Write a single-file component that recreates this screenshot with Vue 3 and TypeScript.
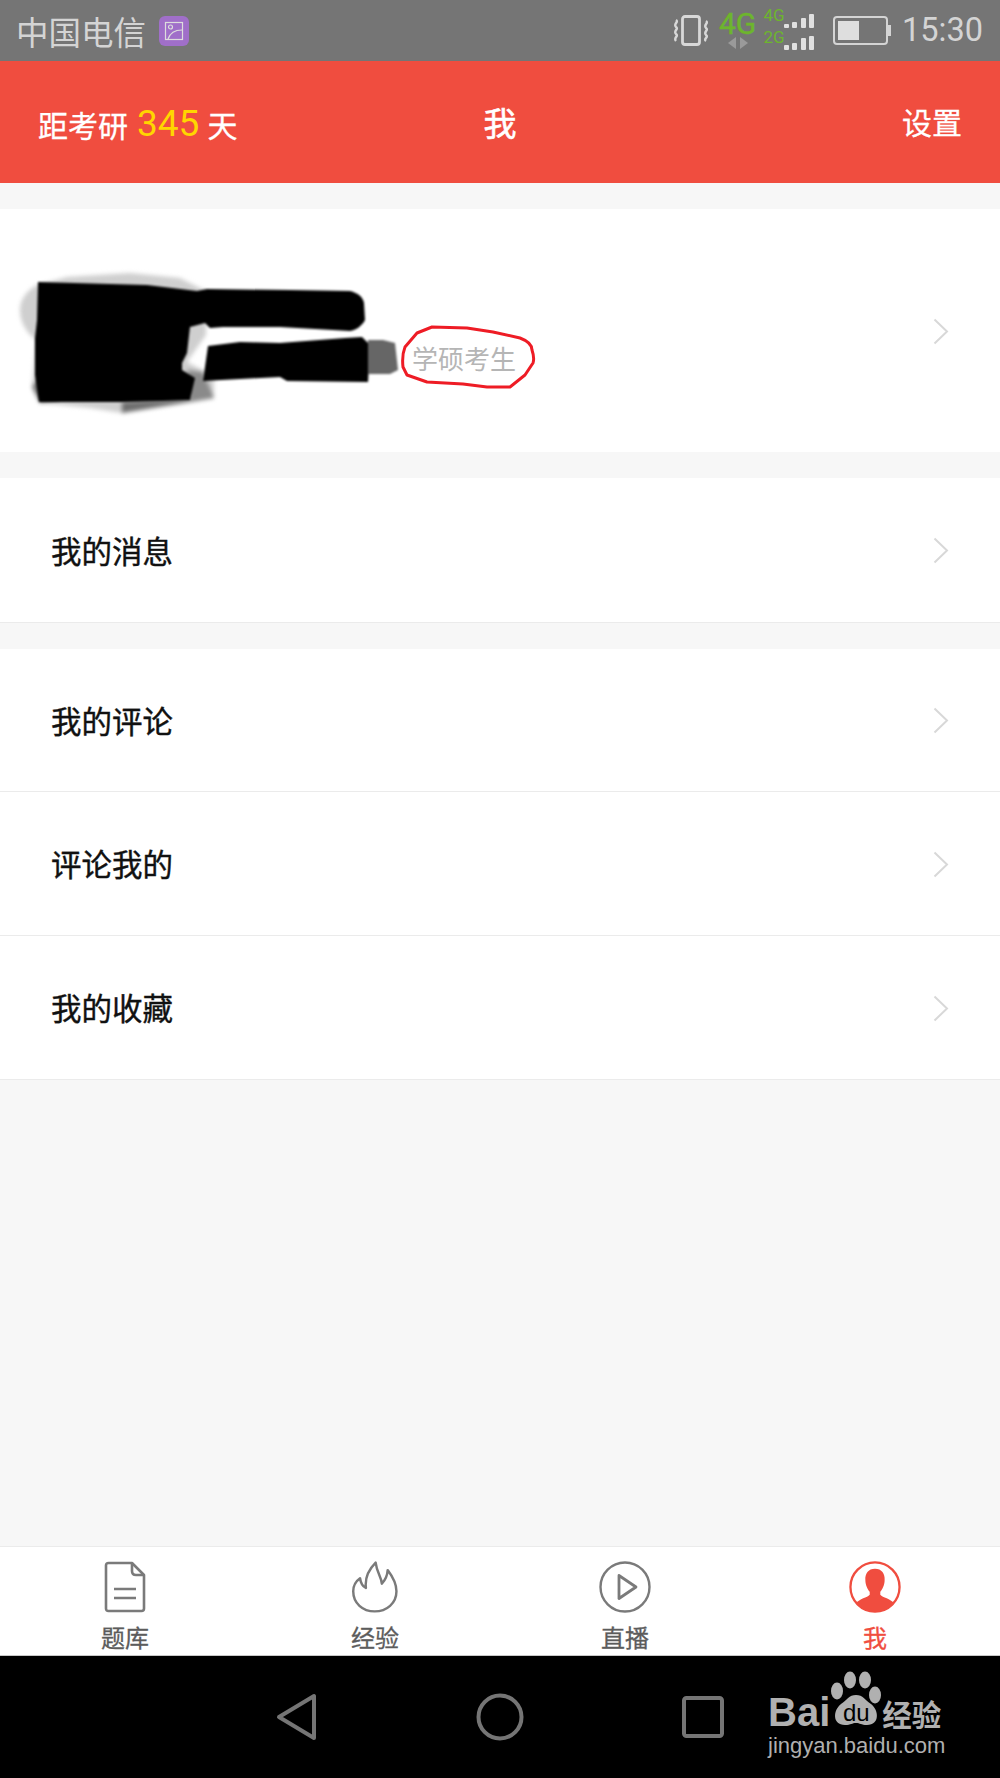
<script setup lang="ts">
const messageRows = ['我的消息']
const listRows = ['我的评论', '评论我的', '我的收藏']
const tabs = [
  { key: 'bank', label: '题库' },
  { key: 'exp', label: '经验' },
  { key: 'live', label: '直播' },
  { key: 'me', label: '我' }
]
// heights of the signal bars: [top sim, bottom sim]
const signalBars = [
  [4, 5],
  [6, 7],
  [10, 12],
  [14, 14]
]
</script>

<template>
  <div class="page">
    <div class="status">
      <div class="status-left">
        <span class="carrier">中国电信</span>
        <span class="pic-badge">
          <svg width="20" height="20" viewBox="0 0 20 20" fill="none" stroke="#ddd" stroke-width="1.2">
            <rect x="1.5" y="1.5" width="17" height="17" />
            <circle cx="6.5" cy="6" r="2" />
            <path d="M4 18 C6 12 11 9 18 9" />
          </svg>
        </span>
      </div>
      <div class="status-right">
        <svg class="vibrate" width="36" height="32" viewBox="0 0 36 32" fill="none" stroke="#d8d8d8">
          <rect x="9.5" y="1.5" width="17" height="28" rx="2.5" stroke-width="2.8" />
          <path d="M3 5 C6 7 0 9 3 12 C6 14 0 16 3 19 C6 21 0 23 3 26" stroke-width="2.4" />
          <path d="M33 6 C36 8 30 10 33 13 C36 15 30 17 33 20 C36 22 30 24 33 26" stroke-width="2.4" />
        </svg>
        <div class="net-main">
          <span class="net-big">4G</span>
          <svg width="20" height="12" viewBox="0 0 20 12" fill="#9a9a9a">
            <path d="M8 0 V12 L0 6 Z" />
            <path d="M12 0 V12 L20 6 Z" />
          </svg>
        </div>
        <div class="net-sub">
          <div v-for="name in ['4G', '2G']" :key="name" class="net-row">
            <span class="net-small">{{ name }}</span>
            <span class="bars">
              <i v-for="(bar, idx) in signalBars" :key="idx" :style="{ height: bar[name === '4G' ? 0 : 1] + 'px' }"></i>
            </span>
          </div>
        </div>
        <div class="battery">
          <div class="battery-fill"></div>
        </div>
        <span class="clock">15:30</span>
      </div>
    </div>

    <header class="topbar">
      <div class="countdown">距考研<b>345</b>天</div>
      <div class="title">我</div>
      <div class="setting">设置</div>
    </header>

    <main class="content">
      <section class="card profile">
        <div class="profile-info">
          <span class="role">学硕考生</span>
        </div>
        <svg class="chevron" width="16" height="27" viewBox="0 0 16 27"><path d="M1.5 1.5 L14 13.5 L1.5 25.5" /></svg>
        <!-- hand-drawn redaction on top of the screenshot -->
        <svg class="scribble" width="560" height="243" viewBox="0 209 560 243">
          <g class="smudge">
            <path d="M20 310 C20 298 28 290 37 285 L67 277 L130 273 L180 278 L206 291 L206 335 L187 362 L214 376 L214 398 L190 402 L122 413 L90 408 L40 403 L32 387 L36 340 C26 332 20 322 20 310 Z" fill="#cfcfcf" />
            <path d="M32 387 L40 376 L60 400 L40 403 Z M122 402 L214 398 L122 413 Z" fill="#6f6f6f" />
            <path d="M187 370 L203 372 L214 398 L190 402 Z" fill="#8a8a8a" />
          </g>
          <g class="blackout">
            <path d="M38 282 L147 285 L197 291 L207 289 L290 290 L350 291 C358 293 363 297 364 303 L365 320 C362 326 356 330 350 331 L280 327 L223 327 L210 328 L205 323 L190 327 L187 353 L182 363 L182 370 L195 378 L190 400 L163 401 L122 402 L39 402 L35 375 L35 338 L37 320 Z" fill="#000" />
            <path d="M208 346 L240 342 L280 343 L345 338 L362 337 L370 345 L368 382 L287 381 L280 377 L203 381 Z" fill="#000" />
            <path d="M368 340 L383 340 L395 343 L398 370 L390 374 L368 374 Z" fill="#666" />
          </g>
          <path d="M432 327 L467 328 L493 332 L520 338 C528 341 532 345 532 350 C534 356 534 360 533 363 L525 375 L510 387 L487 387 L463 384 L427 382 L407 375 L403 367 C402 358 403 352 405 347 L417 333 Z" fill="none" stroke="#ee1c25" stroke-width="3" stroke-linejoin="round" />
        </svg>
      </section>

      <section class="card">
        <div v-for="row in messageRows" :key="row" class="row">
          <span>{{ row }}</span>
          <svg class="chevron" width="16" height="27" viewBox="0 0 16 27"><path d="M1.5 1.5 L14 13.5 L1.5 25.5" /></svg>
        </div>
      </section>

      <section class="card">
        <div v-for="row in listRows" :key="row" class="row">
          <span>{{ row }}</span>
          <svg class="chevron" width="16" height="27" viewBox="0 0 16 27"><path d="M1.5 1.5 L14 13.5 L1.5 25.5" /></svg>
        </div>
      </section>
    </main>

    <nav class="tabs">
      <div v-for="tab in tabs" :key="tab.key" class="tab" :class="{ active: tab.key === 'me' }">
        <svg v-if="tab.key === 'bank'" width="42" height="52" viewBox="0 0 42 52" fill="none" stroke="#7a7a7a" stroke-width="2.6" stroke-linejoin="round">
          <path d="M4.5 2 H28 L40 14 V47.5 Q40 50 37.5 50 H4.5 Q2 50 2 47.5 V4.5 Q2 2 4.5 2 Z" />
          <path d="M28 2 V10 Q28 14 32 14 H40" />
          <path d="M10 28 H32 M10 37 H32" />
        </svg>
        <svg v-else-if="tab.key === 'exp'" width="52" height="52" viewBox="1050 92 152 160" fill="none" stroke="#7a7a7a" stroke-width="7.5" stroke-linejoin="round">
          <path d="M1128 97 C1132 130 1146 140 1147 162 C1156 152 1164 138 1165 120 C1180 140 1192 160 1192 185 C1192 222 1162 247 1125 247 C1088 247 1059 222 1059 185 C1059 170 1066 155 1080 145 C1082 160 1088 170 1098 175 C1095 150 1105 120 1128 97 Z" />
        </svg>
        <svg v-else-if="tab.key === 'live'" width="52" height="52" viewBox="0 0 52 52" fill="none" stroke="#7a7a7a" stroke-width="2.4" stroke-linejoin="round">
          <circle cx="26" cy="26" r="24.5" />
          <path d="M20 14.5 L37 26 L20 37.5 Z" stroke-width="2.8" />
        </svg>
        <svg v-else width="54" height="52" viewBox="0 0 54 54">
          <circle cx="27" cy="27" r="25.5" fill="none" stroke="#f04d3f" stroke-width="2.4" />
          <path d="M27 8 C34 8 37.5 13 37 20 C37 25 34.5 30 32.5 32 L32.5 35 C35 38 43 39 47 44 C42 50 34 53 27 53 C20 53 12 50 7 44 C11 39 19 38 21.5 35 L21.5 32 C19.5 30 17 25 17 20 C16.5 13 20 8 27 8 Z" fill="#f04d3f" />
        </svg>
        <span class="tab-label">{{ tab.label }}</span>
      </div>
    </nav>

    <div class="navbar">
      <svg width="42" height="48" viewBox="0 0 42 48" fill="none" stroke="#757575" stroke-width="4" stroke-linejoin="round">
        <path d="M38 3 V45 L3 24 Z" />
      </svg>
      <svg width="48" height="48" viewBox="0 0 48 48" fill="none" stroke="#757575" stroke-width="4">
        <circle cx="24" cy="24" r="21.5" />
      </svg>
      <svg width="42" height="42" viewBox="0 0 42 42" fill="none" stroke="#757575" stroke-width="4">
        <rect x="2" y="2" width="38" height="38" rx="2.5" />
      </svg>

      <div class="watermark">
        <div class="wm-top">
          <span class="wm-bai">Bai</span>
          <span class="wm-paw">
            <svg width="52" height="56" viewBox="0 0 52 56" fill="#b0b0b0">
              <ellipse cx="20" cy="9" rx="6" ry="8.5" />
              <ellipse cx="35" cy="9" rx="6" ry="8.5" />
              <ellipse cx="7" cy="20" rx="6" ry="8.5" />
              <ellipse cx="45" cy="24" rx="6" ry="8.5" />
              <path d="M26 24 C33 24 35 29 41 33 C49 39 50 54 37 54 C31 54 30 52 26 52 C22 52 21 54 15 54 C2 54 3 39 11 33 C17 29 19 24 26 24 Z" />
            </svg>
            <span class="wm-du">du</span>
          </span>
          <span class="wm-cn">经验</span>
        </div>
        <div class="wm-url">jingyan.baidu.com</div>
      </div>
    </div>
  </div>
</template>

<style>
html, body {
  margin: 0;
  background: #f7f7f7;
}
</style>

<style scoped>
.page {
  display: flex;
  flex-direction: column;
  width: 1000px;
  height: 1778px;
  overflow: hidden;
  background: #f7f7f7;
  font-family: "Noto Sans CJK SC", "Noto Sans", sans-serif;
}

.status {
  flex: 0 0 61px;
  display: flex;
  justify-content: space-between;
  align-items: center;
  padding: 0 17px 0 16px;
  background: #757575;
  color: #d4d4d4;
}
.status-left, .status-right {
  display: flex;
  align-items: center;
}
.carrier {
  font-size: 32.5px;
  line-height: 61px;
}
.pic-badge {
  display: flex;
  align-items: center;
  justify-content: center;
  width: 30px;
  height: 30px;
  margin-left: 13px;
  border-radius: 6px;
  background: #a06fc9;
}
.vibrate {
  margin-right: 10px;
}
.net-main {
  display: flex;
  flex-direction: column;
  align-items: center;
  width: 38px;
  margin-top: -2px;
}
.net-big {
  font-family: Roboto, sans-serif;
  font-size: 30px;
  line-height: 26px;
  color: #6db52d;
  -webkit-text-stroke: 0.4px #6db52d;
}
.net-sub {
  margin-left: 7px;
  margin-right: 19px;
  margin-top: -3px;
}
.net-row {
  display: flex;
  align-items: flex-end;
  height: 22px;
}
.net-small {
  width: 22px;
  margin-bottom: 4px;
  font-family: Roboto, sans-serif;
  font-size: 17px;
  line-height: 20px;
  color: #6db52d;
}
.bars {
  display: flex;
  align-items: flex-end;
  gap: 3.5px;
  margin-left: -2px;
  margin-bottom: 1px;
}
.bars i {
  display: block;
  width: 5px;
  border-radius: 1px;
  background: #e0e0e0;
}
.battery {
  position: relative;
  box-sizing: border-box;
  width: 55px;
  height: 29px;
  padding: 3px;
  border: 2px solid #d4d4d4;
  border-radius: 4px;
}
.battery::after {
  content: "";
  position: absolute;
  right: -5px;
  top: 7px;
  width: 3px;
  height: 11px;
  background: #d4d4d4;
}
.battery-fill {
  width: 21px;
  height: 100%;
  background: #dedede;
}
.clock {
  margin-left: 14px;
  font-family: Roboto, sans-serif;
  font-size: 32.5px;
  line-height: 61px;
}

.topbar {
  flex: 0 0 122px;
  box-sizing: border-box;
  position: relative;
  display: flex;
  justify-content: space-between;
  align-items: center;
  padding: 0 38px;
  background: #f04d3f;
  color: #fff;
  font-size: 30px;
  -webkit-text-stroke: 0.3px #fff;
}
.countdown {
  display: flex;
  align-items: center;
  padding-top: 3px;
}
.countdown b {
  margin: 0 8px 0 9px;
  font-family: Roboto, sans-serif;
  font-size: 37px;
  font-weight: 400;
  color: #ffd600;
  -webkit-text-stroke: 0;
}
.title {
  position: absolute;
  left: 0;
  right: 0;
  text-align: center;
  font-size: 33px;
  -webkit-text-stroke: 0.6px #fff;
}
.setting {
  padding-bottom: 2px;
}

.content {
  flex: 1;
  display: flex;
  flex-direction: column;
  gap: 26px;
  padding-top: 26px;
}
.card {
  background: #fff;
  border-bottom: 1px solid #ebebeb;
}
.profile {
  position: relative;
  box-sizing: border-box;
  height: 243px;
  display: flex;
  align-items: center;
  justify-content: space-between;
  padding: 0 51px 0 412px;
  border-bottom: none;
}
.profile-info {
  padding-top: 53px;
}
.role {
  font-size: 26px;
  color: #b5b5b5;
}
.scribble {
  position: absolute;
  left: 0;
  top: 0;
  pointer-events: none;
}
.smudge {
  filter: blur(2px);
}
.blackout {
  filter: blur(0.8px);
}
.row {
  box-sizing: border-box;
  height: 143.5px;
  display: flex;
  align-items: center;
  justify-content: space-between;
  padding: 0 51px;
  font-size: 30.5px;
  color: #111;
  border-bottom: 1px solid #ebebeb;
}
.row span {
  -webkit-text-stroke: 0.4px #111;
}
.row:last-child {
  border-bottom: none;
}
.chevron {
  fill: none;
  stroke: #d8d8d8;
  stroke-width: 2;
  margin-top: 2px;
}

.tabs {
  flex: 0 0 109px;
  box-sizing: border-box;
  display: grid;
  grid-template-columns: repeat(4, 1fr);
  background: #fff;
  border-top: 1px solid #ebebeb;
}
.tab {
  display: flex;
  flex-direction: column;
  align-items: center;
  padding-top: 14px;
}
.tab-label {
  margin-top: 9px;
  font-size: 24px;
  line-height: 30px;
  color: #5c5c5c;
  -webkit-text-stroke: 0.3px #5c5c5c;
}
.tab.active .tab-label {
  color: #f04d3f;
  -webkit-text-stroke: 0.3px #f04d3f;
}

.navbar {
  flex: 0 0 123px;
  box-sizing: border-box;
  position: relative;
  display: flex;
  align-items: center;
  padding: 0 0 0 276px;
  gap: 158px;
  background: #000;
  border-top: 1px solid #c8c8c8;
}
.watermark {
  position: absolute;
  left: 768px;
  top: 15px;
  color: #b0b0b0;
  font-family: "Liberation Sans", sans-serif;
}
.wm-top {
  display: flex;
  align-items: flex-end;
  height: 56px;
}
.wm-bai {
  font-size: 40px;
  font-weight: 700;
  line-height: 44px;
  margin-bottom: -7px;
}
.wm-paw {
  position: relative;
  width: 52px;
  height: 56px;
}
.wm-du {
  position: absolute;
  left: 0;
  right: 0;
  top: 30px;
  text-align: center;
  font-size: 24px;
  line-height: 24px;
  color: #000;
}
.wm-cn {
  margin-left: 0;
  margin-bottom: -6px;
  font-family: "Noto Sans CJK SC", sans-serif;
  font-size: 29.5px;
  font-weight: 700;
  line-height: 40px;
}
.wm-url {
  margin-top: 6px;
  font-size: 22px;
  line-height: 26px;
}
</style>
